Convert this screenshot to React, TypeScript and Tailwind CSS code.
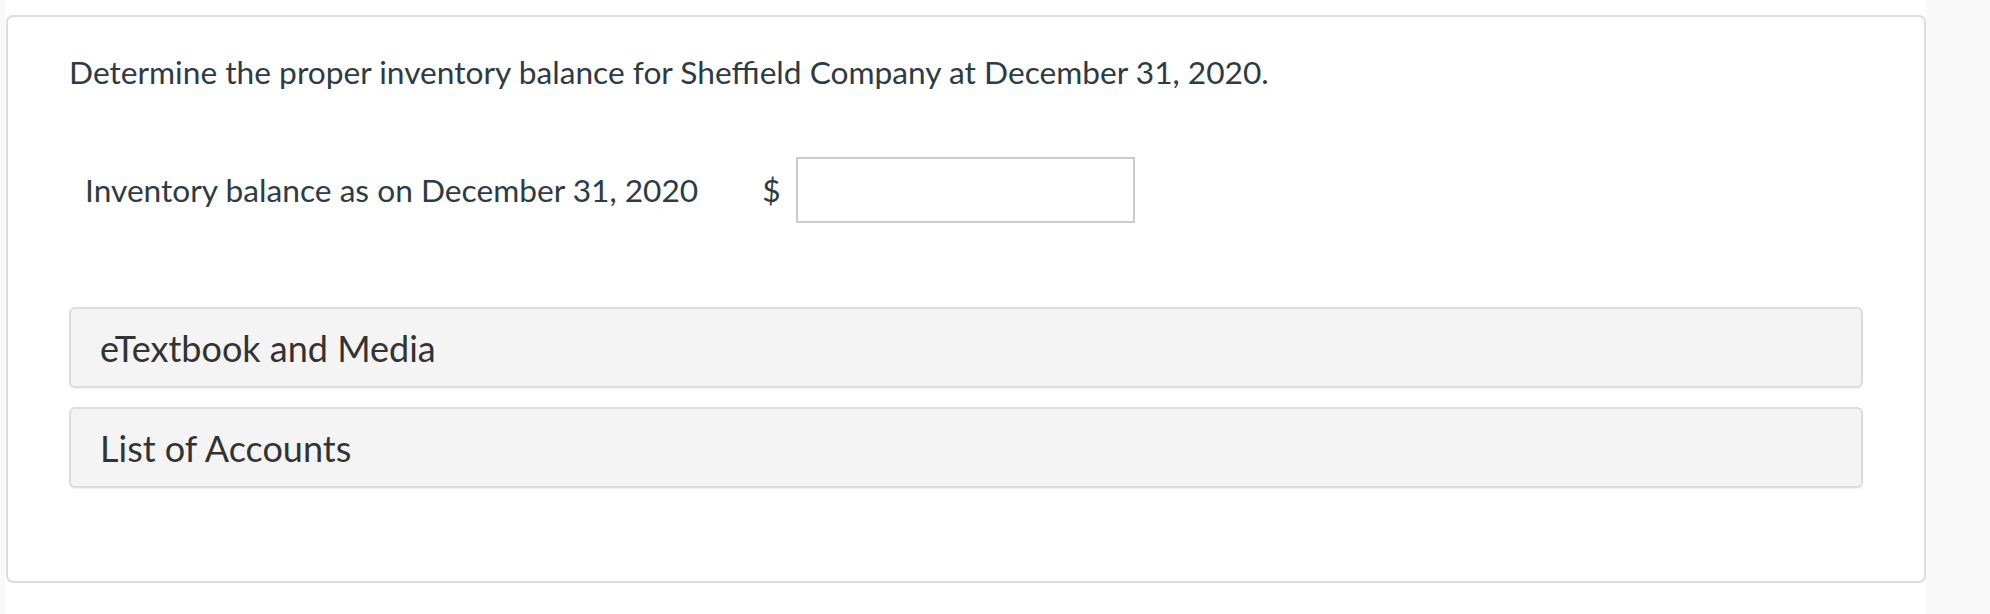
export default function App() {
  return (
    <div className="flex w-[1990px] h-[614px] bg-[#f9f9f9] font-['Lato',sans-serif] text-[#2d3b45]">
      <div className="ml-[5px] w-[1921px] h-full bg-white pt-[15px]">
        <div className="ml-px w-[1920px] h-[568px] border-2 border-[#dddddd] rounded-[7px] bg-white pl-[61px] pt-[34px]">
          <h1 className="text-[31.7px] leading-[42px]">
            Determine the proper inventory balance for Sheffield Company at December 31, 2020.
          </h1>

          <div className="flex items-center mt-[64px] h-[66px]">
            <span className="ml-[16px] text-[31.7px] leading-[42px]">
              Inventory balance as on December 31, 2020
            </span>
            <span className="ml-[64px] text-[31.7px] leading-[42px]">$</span>
            <input
              type="text"
              className="ml-[15px] w-[339px] h-[66px] border-2 border-[#cccccc] bg-white outline-none"
            />
          </div>

          <div className="mt-[84px] w-[1794px] flex flex-col gap-[19px]">
            <div className="h-[81px] flex items-center pl-[29px] bg-[#f4f4f4] border-2 border-[#dddddd] rounded-[6px] shadow-[0_1px_2px_rgba(0,0,0,0.06)] text-[36px] text-[#333333]">
              eTextbook and Media
            </div>
            <div className="h-[81px] flex items-center pl-[29px] bg-[#f4f4f4] border-2 border-[#dddddd] rounded-[6px] shadow-[0_1px_2px_rgba(0,0,0,0.06)] text-[36px] text-[#333333]">
              List of Accounts
            </div>
          </div>
        </div>
      </div>
    </div>
  );
}
